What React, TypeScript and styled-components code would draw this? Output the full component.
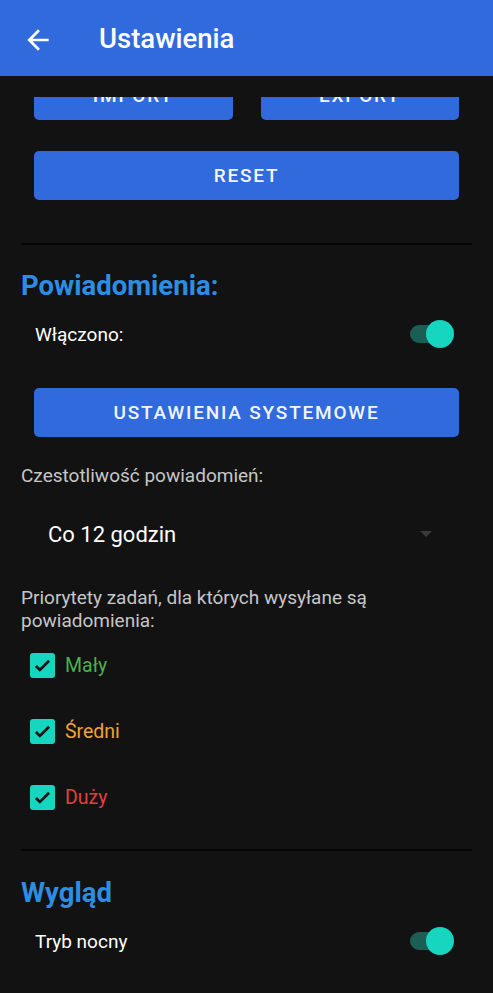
import styled, { createGlobalStyle } from "styled-components";

const GlobalStyle = createGlobalStyle`
  html, body {
    margin: 0;
    padding: 0;
    background: #121212;
    font-family: Roboto, "Liberation Sans", sans-serif;
  }
  * {
    box-sizing: border-box;
  }
`;

const Page = styled.div`
  width: 493px;
  height: 993px;
  overflow: hidden;
  background: #121212;
`;

const AppBar = styled.header`
  height: 76px;
  background: #306add;
  display: flex;
  align-items: center;
  padding-left: 22px;
`;

const BackButton = styled.div`
  width: 32px;
  height: 32px;
  margin-top: 3px;
  display: flex;
  align-items: center;
  justify-content: center;
`;

const Title = styled.h1`
  margin: 0 0 0 45px;
  font-size: 27.5px;
  font-weight: 500;
  color: #ffffff;
`;

const Content = styled.main`
  padding: 0 21px;
`;

// scrolled list: only the bottom of the first button row is visible
const ScrollClip = styled.div`
  margin-top: 21px;
  height: 23px;
  overflow: hidden;
  display: flex;
  align-items: flex-end;
`;

const ButtonRow = styled.div`
  display: grid;
  grid-template-columns: 1fr 1fr;
  gap: 28px;
  width: 100%;
  padding: 0 13px;
`;

const Button = styled.button`
  display: flex;
  align-items: center;
  justify-content: center;
  width: 100%;
  height: 49px;
  border: none;
  border-radius: 5px;
  background: #306add;
  color: #f2f5ff;
  font-family: Roboto, "Liberation Sans", sans-serif;
  font-size: 19px;
  font-weight: 500;
  letter-spacing: 1.8px;
  text-transform: uppercase;
`;

const ButtonWrap = styled.div<{ $mt: number }>`
  padding: 0 13px;
  margin-top: ${(p) => p.$mt}px;
`;

const Divider = styled.hr<{ $mt: number }>`
  margin: ${(p) => p.$mt}px 0 0;
  border: none;
  height: 2px;
  background: #050505;
`;

const SectionTitle = styled.h2<{ $mt: number }>`
  margin: ${(p) => p.$mt}px 0 0;
  font-size: 27.5px;
  line-height: 32px;
  font-weight: 700;
  color: #2d8de3;
`;

const SwitchRow = styled.div`
  margin-top: 8px;
  height: 48px;
  display: flex;
  align-items: center;
  justify-content: space-between;
  padding: 0 18px 0 14px;
`;

const RowLabel = styled.span`
  font-size: 19px;
  color: #ffffff;
`;

const Switch = styled.div`
  position: relative;
  width: 44px;
  height: 28px;
  display: flex;
  align-items: center;
`;

const Track = styled.div`
  width: 38px;
  height: 18px;
  border-radius: 9px;
  background: #1c5d56;
`;

const Thumb = styled.div`
  position: absolute;
  right: 0;
  top: 0;
  width: 28px;
  height: 28px;
  border-radius: 50%;
  background: #17d6c0;
`;

const Caption = styled.p<{ $mt: number }>`
  margin: ${(p) => p.$mt}px 0 0;
  font-size: 19px;
  line-height: 23px;
  color: #c6c6c6;
`;

const Spinner = styled.div`
  margin-top: 17px;
  height: 60px;
  display: flex;
  align-items: center;
  justify-content: space-between;
  padding: 0 40px 0 27px;
`;

const SpinnerValue = styled.span`
  font-size: 22px;
  color: #ffffff;
`;

const SpinnerArrow = styled.div`
  width: 0;
  height: 0;
  border-left: 6px solid transparent;
  border-right: 6px solid transparent;
  border-top: 6px solid #3a3a3a;
`;

const CheckRow = styled.label`
  height: 66px;
  display: flex;
  align-items: center;
  padding-left: 9px;
`;

const CheckBox = styled.span`
  width: 25px;
  height: 25px;
  border-radius: 3px;
  background: #17d6c0;
  display: flex;
  align-items: center;
  justify-content: center;
`;

const CheckLabel = styled.span<{ $color: string }>`
  margin-left: 10px;
  font-size: 19.5px;
  color: ${(p) => p.$color};
`;

const priorities = [
  { label: "Mały", color: "#4caf50" },
  { label: "Średni", color: "#f0a330" },
  { label: "Duży", color: "#e0403e" },
];

function Toggle() {
  return (
    <Switch>
      <Track />
      <Thumb />
    </Switch>
  );
}

export default function App() {
  return (
    <Page>
      <GlobalStyle />
      <AppBar>
        <BackButton>
          <svg width="32" height="32" viewBox="0 0 24 24" fill="#ffffff">
            <path d="M20 11H7.83l5.59-5.59L12 4l-8 8 8 8 1.41-1.41L7.83 13H20v-2z" />
          </svg>
        </BackButton>
        <Title>Ustawienia</Title>
      </AppBar>
      <Content>
        <ScrollClip>
          <ButtonRow>
            <Button>Import</Button>
            <Button>Export</Button>
          </ButtonRow>
        </ScrollClip>
        <ButtonWrap $mt={31}>
          <Button>Reset</Button>
        </ButtonWrap>
        <Divider $mt={43} />

        <SectionTitle $mt={25}>Powiadomienia:</SectionTitle>
        <SwitchRow>
          <RowLabel>Włączono:</RowLabel>
          <Toggle />
        </SwitchRow>
        <ButtonWrap $mt={30}>
          <Button>Ustawienia systemowe</Button>
        </ButtonWrap>
        <Caption $mt={27}>Czestotliwość powiadomień:</Caption>
        <Spinner>
          <SpinnerValue>Co 12 godzin</SpinnerValue>
          <SpinnerArrow />
        </Spinner>
        <Caption $mt={22}>
          Priorytety zadań, dla których wysyłane są powiadomienia:
        </Caption>
        {priorities.map((p) => (
          <CheckRow key={p.label}>
            <CheckBox>
              <svg width="21" height="21" viewBox="0 0 24 24" fill="none">
                <path
                  d="M4.5 12.5l4.5 4.5L19.5 6.5"
                  stroke="#141414"
                  strokeWidth="3.2"
                />
              </svg>
            </CheckBox>
            <CheckLabel $color={p.color}>{p.label}</CheckLabel>
          </CheckRow>
        ))}
        <Divider $mt={19} />

        <SectionTitle $mt={26}>Wygląd</SectionTitle>
        <SwitchRow>
          <RowLabel>Tryb nocny</RowLabel>
          <Toggle />
        </SwitchRow>
      </Content>
    </Page>
  );
}
